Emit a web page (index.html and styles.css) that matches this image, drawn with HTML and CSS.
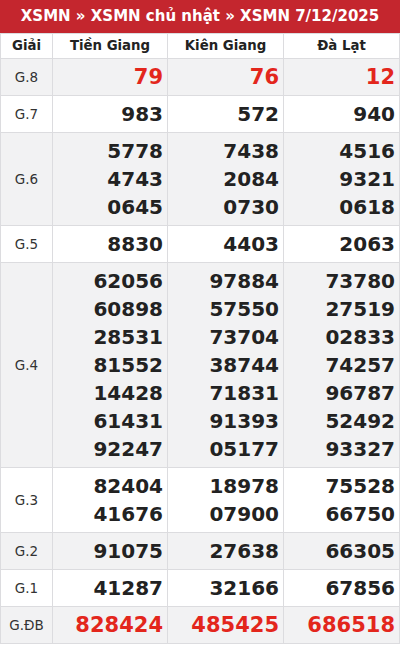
FILE: index.html
```html
<!DOCTYPE html>
<html lang="vi">
<head>
<meta charset="utf-8">
<link rel="stylesheet" href="styles.css">
</head>
<body>
<div class="box">
  <div class="title">XSMN » XSMN chủ nhật » XSMN 7/12/2025</div>
  <table class="kq">
    <colgroup><col class="c0"><col class="c1"><col class="c2"><col class="c3"></colgroup>
    <thead>
      <tr><th>Giải</th><th>Tiền Giang</th><th>Kiên Giang</th><th>Đà Lạt</th></tr>
    </thead>
    <tbody>
      <tr class="alt"><td class="g">G.8</td><td class="n red">79</td><td class="n red">76</td><td class="n red">12</td></tr>
      <tr><td class="g">G.7</td><td class="n">983</td><td class="n">572</td><td class="n">940</td></tr>
      <tr class="alt"><td class="g">G.6</td>
        <td class="n"><div>5778</div><div>4743</div><div>0645</div></td>
        <td class="n"><div>7438</div><div>2084</div><div>0730</div></td>
        <td class="n"><div>4516</div><div>9321</div><div>0618</div></td></tr>
      <tr><td class="g">G.5</td><td class="n">8830</td><td class="n">4403</td><td class="n">2063</td></tr>
      <tr class="alt"><td class="g">G.4</td>
        <td class="n"><div>62056</div><div>60898</div><div>28531</div><div>81552</div><div>14428</div><div>61431</div><div>92247</div></td>
        <td class="n"><div>97884</div><div>57550</div><div>73704</div><div>38744</div><div>71831</div><div>91393</div><div>05177</div></td>
        <td class="n"><div>73780</div><div>27519</div><div>02833</div><div>74257</div><div>96787</div><div>52492</div><div>93327</div></td></tr>
      <tr><td class="g">G.3</td>
        <td class="n"><div>82404</div><div>41676</div></td>
        <td class="n"><div>18978</div><div>07900</div></td>
        <td class="n"><div>75528</div><div>66750</div></td></tr>
      <tr class="alt"><td class="g">G.2</td><td class="n">91075</td><td class="n">27638</td><td class="n">66305</td></tr>
      <tr><td class="g">G.1</td><td class="n">41287</td><td class="n">32166</td><td class="n">67856</td></tr>
      <tr class="alt"><td class="g">G.ĐB</td><td class="n red">828424</td><td class="n red">485425</td><td class="n red">686518</td></tr>
    </tbody>
  </table>
</div>
</body>
</html>
```

FILE: styles.css
```css
html, body {
  margin: 0;
  padding: 0;
  background: #ffffff;
}
body {
  font-family: "DejaVu Sans", "Liberation Sans", sans-serif;
  color: #222;
}
.box {
  width: 400px;
}
.title {
  background: #c4262e;
  color: #fff;
  font-weight: bold;
  font-size: 15px;
  line-height: 33px;
  height: 33px;
  text-align: center;
}
.kq {
  border-collapse: collapse;
  width: 399px;
  table-layout: fixed;
}
.c0 { width: 52px; }
.c1 { width: 115px; }
.c2 { width: 116px; }
.c3 { width: 116px; }
.kq th, .kq td {
  border: 1px solid #dcdcdf;
}
.kq th {
  font-size: 13.3px;
  font-weight: bold;
  line-height: 16px;
  padding: 4px 4px;
  color: #222;
  background: #fff;
  text-align: center;
}
.kq tr.alt td {
  background: #f2f2f3;
}
.g {
  font-size: 13.5px;
  color: #333;
  text-align: center;
  padding: 0;
}
.n {
  text-align: right;
  font-weight: bold;
  font-size: 20px;
  line-height: 28px;
  padding: 4px 4px 4px 0;
  color: #222;
}
.n.red {
  color: #e3261c;
  font-size: 21px;
}
```
